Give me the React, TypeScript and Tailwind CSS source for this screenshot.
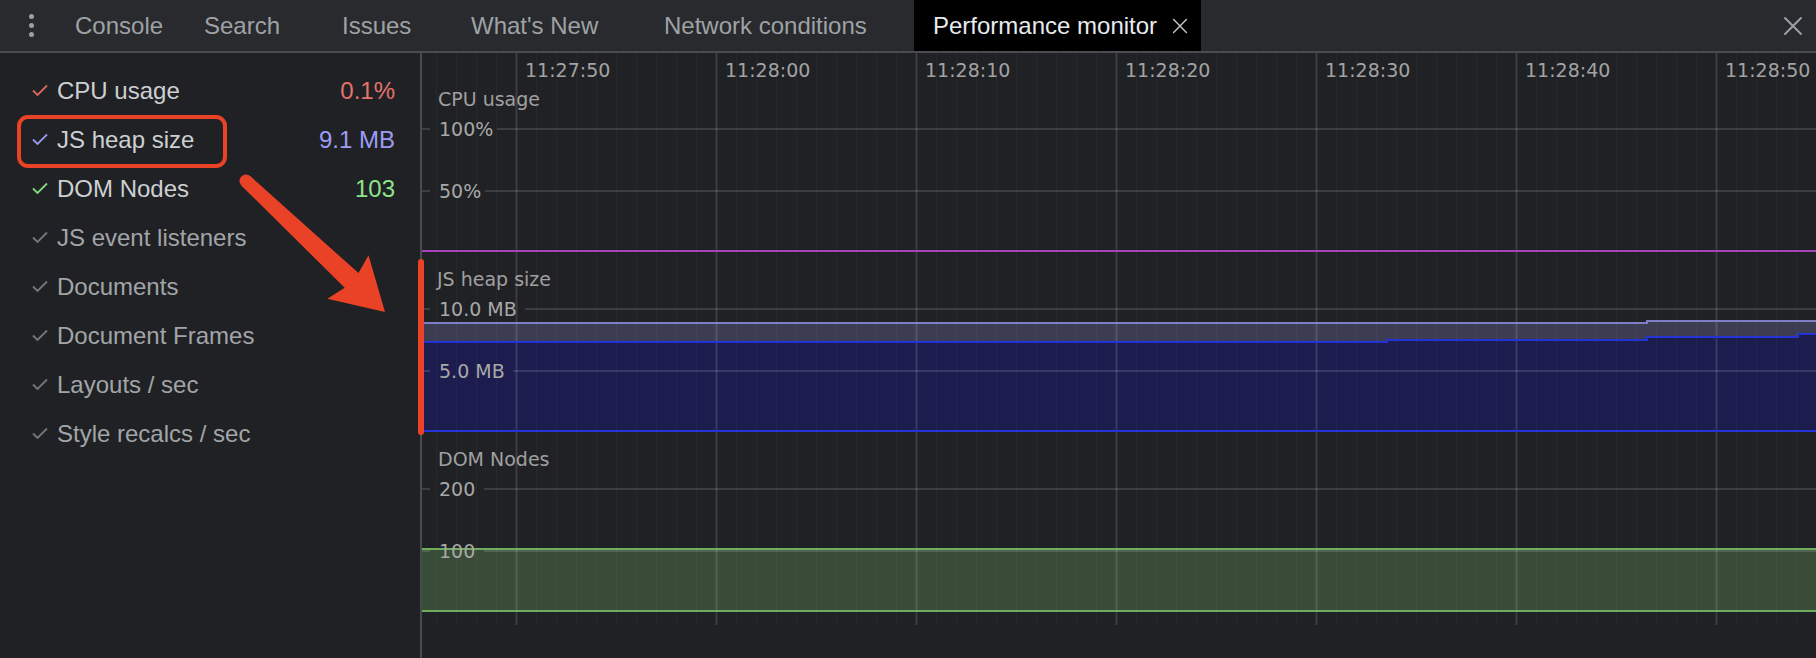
import React from "react";

type Tab = { label: string; w: string; active?: boolean };

const tabs: Tab[] = [
  { label: "Console", w: "w-[129px]" },
  { label: "Search", w: "w-[138px]" },
  { label: "Issues", w: "w-[129px]" },
  { label: "What's New", w: "w-[193px]" },
  { label: "Network conditions", w: "w-[269px]" },
  { label: "Performance monitor", w: "w-[287px]", active: true },
];

type Metric = { label: string; value?: string; color: string; check: string; on: boolean };

const metrics: Metric[] = [
  { label: "CPU usage", value: "0.1%", color: "#e5736b", check: "#d9675f", on: true },
  { label: "JS heap size", value: "9.1 MB", color: "#9c9cf5", check: "#9898f0", on: true },
  { label: "DOM Nodes", value: "103", color: "#8ee48a", check: "#82d97e", on: true },
  { label: "JS event listeners", color: "", check: "#75777a", on: false },
  { label: "Documents", color: "", check: "#75777a", on: false },
  { label: "Document Frames", color: "", check: "#75777a", on: false },
  { label: "Layouts / sec", color: "", check: "#75777a", on: false },
  { label: "Style recalcs / sec", color: "", check: "#75777a", on: false },
];

const W = 1394;
const H = 605;
const times = ["11:27:50", "11:28:00", "11:28:10", "11:28:20", "11:28:30", "11:28:40", "11:28:50"];
const minors = Array.from({ length: 70 }, (_, i) => 14 + i * 20).filter((x) => x < W);

const gridRows = [
  { y: 76, label: "100%", resume: 75 },
  { y: 138, label: "50%", resume: 63 },
  { y: 256, label: "10.0 MB", resume: 103 },
  { y: 318, label: "5.0 MB", resume: 91 },
  { y: 436, label: "200", resume: 62 },
  { y: 498, label: "100", resume: 62 },
];

function Check({ color }: { color: string }) {
  return (
    <svg width="16" height="13" viewBox="0 0 16 13" className="shrink-0">
      <path d="M1 6.5 L5.5 11 L15 1.5" fill="none" stroke={color} strokeWidth="1.8" />
    </svg>
  );
}

function CloseIcon({ size, color, stroke }: { size: number; color: string; stroke: number }) {
  return (
    <svg width={size} height={size} viewBox="0 0 20 20">
      <path d="M2 2 L18 18 M18 2 L2 18" stroke={color} strokeWidth={stroke} strokeLinecap="round" />
    </svg>
  );
}

function Chart() {
  // heap: total (lavender) and used (blue) step lines
  const total = `M0 270 H1225 V268 H${W}`;
  const used = `M0 289 H965 V287 H1225 V284 H1376 V281 H${W}`;
  const totalFill = `M0 270 H1225 V268 H${W} V281 H1376 V284 H1225 V287 H965 V289 H0 Z`;
  const usedFill = `M0 289 H965 V287 H1225 V284 H1376 V281 H${W} V378 H0 Z`;

  return (
    <svg width={W} height={H} className="block font-['DejaVu_Sans',sans-serif] text-[19px]">
      {/* fills */}
      <path d={totalFill} fill="#3c3c52" />
      <path d={usedFill} fill="#1c1c4e" />
      <rect x="0" y="496" width={W} height="62" fill="#394c38" />

      {/* vertical grid */}
      {minors.map((x) => (
        <line
          key={x}
          x1={x + 0.5}
          x2={x + 0.5}
          y1="0"
          y2="572"
          stroke={(x - 94) % 200 === 0 ? "rgba(255,255,255,0.13)" : "rgba(255,255,255,0.035)"}
          strokeWidth={(x - 94) % 200 === 0 ? 2 : 1}
        />
      ))}

      {/* horizontal grid + labels */}
      {gridRows.map((r) => (
        <g key={r.label}>
          <line x1="0" x2="8" y1={r.y} y2={r.y} stroke="rgba(255,255,255,0.13)" strokeWidth="2" />
          <line x1={r.resume} x2={W} y1={r.y} y2={r.y} stroke="rgba(255,255,255,0.13)" strokeWidth="2" />
        </g>
      ))}

      {/* series lines */}
      <line x1="0" x2={W} y1="198" y2="198" stroke="#a842b8" strokeWidth="2" />
      <path d={total} fill="none" stroke="#7f7fc6" strokeWidth="2" />
      <path d={used} fill="none" stroke="#2433d6" strokeWidth="2" />
      <line x1="0" x2={W} y1="378" y2="378" stroke="#2433d6" strokeWidth="2" />
      <line x1="0" x2={W} y1="496" y2="496" stroke="#6fae5f" strokeWidth="2" />
      <line x1="0" x2={W} y1="558" y2="558" stroke="#6fae5f" strokeWidth="2" />

      {/* time header */}
      {times.map((t, i) => (
        <text key={t} x={94 + i * 200 + 9} y="24" fill="#a3a3a3">
          {t}
        </text>
      ))}

      {/* section titles */}
      <text x="16" y="53" fill="#a0a0a0">CPU usage</text>
      <text x="15" y="233" fill="#a0a0a0">JS heap size</text>
      <text x="16" y="413" fill="#a0a0a0">DOM Nodes</text>

      {gridRows.map((r) => (
        <text key={r.label} x="17" y={r.y + 7} fill="#a8a8a8">
          {r.label}
        </text>
      ))}
    </svg>
  );
}

export default function App() {
  return (
    <div className="relative w-[1816px] h-[658px] overflow-hidden bg-[#202124] flex flex-col font-['Liberation_Sans',Arial,sans-serif]">
      {/* Tab bar */}
      <div className="h-[53px] shrink-0 flex items-stretch bg-[#292a2d] border-b-2 border-[#4a4c50]">
        <div className="w-[56px] flex flex-col items-center justify-center gap-[4px] pl-[7px]">
          <span className="w-[5px] h-[5px] rounded-full bg-[#9aa0a6]" />
          <span className="w-[5px] h-[5px] rounded-full bg-[#9aa0a6]" />
          <span className="w-[5px] h-[5px] rounded-full bg-[#9aa0a6]" />
        </div>
        {tabs.map((t) => (
          <div
            key={t.label}
            className={`${t.w} flex items-center pl-[19px] text-[24px] whitespace-nowrap ${
              t.active ? "bg-black text-[#e8eaed]" : "text-[#9ea2a6]"
            }`}
          >
            {t.label}
            {t.active && (
              <span className="ml-[15px] flex">
                <CloseIcon size={16} color="#c2c4c6" stroke={1.8} />
              </span>
            )}
          </div>
        ))}
        <div className="ml-auto flex items-center pr-[13px]">
          <CloseIcon size={20} color="#9aa0a6" stroke={2} />
        </div>
      </div>

      <div className="flex flex-1">
        {/* Metrics list */}
        <div className="w-[422px] shrink-0 border-r-2 border-[#4a4b4e] pt-[13px]">
          {metrics.map((m) => (
            <div key={m.label} className="h-[49px] flex items-center pl-[32px] pr-[25px] text-[24px]">
              <Check color={m.check} />
              <span className={`ml-[9px] ${m.on ? "text-[#cdd0d3]" : "text-[#a2a5a8]"}`}>{m.label}</span>
              {m.value && (
                <span className="ml-auto" style={{ color: m.color }}>
                  {m.value}
                </span>
              )}
            </div>
          ))}
        </div>

        {/* Charts */}
        <div className="flex-1">
          <Chart />
        </div>
      </div>

      {/* Annotation overlay */}
      <svg width="1816" height="658" className="absolute inset-0 pointer-events-none">
        <rect x="19" y="117" width="206" height="49" rx="9" fill="none" stroke="#ea4227" strokeWidth="4" />
        <circle cx="246" cy="181" r="6.5" fill="#ea4227" />
        <polygon
          points="250.5,176.3 358.5,273.1 368.5,255.2 385,312 327.3,298.8 344.7,287.7 241.5,185.7"
          fill="#ea4227"
        />
        <rect x="418" y="259" width="6" height="176" rx="3" fill="#ea4227" />
      </svg>
    </div>
  );
}
